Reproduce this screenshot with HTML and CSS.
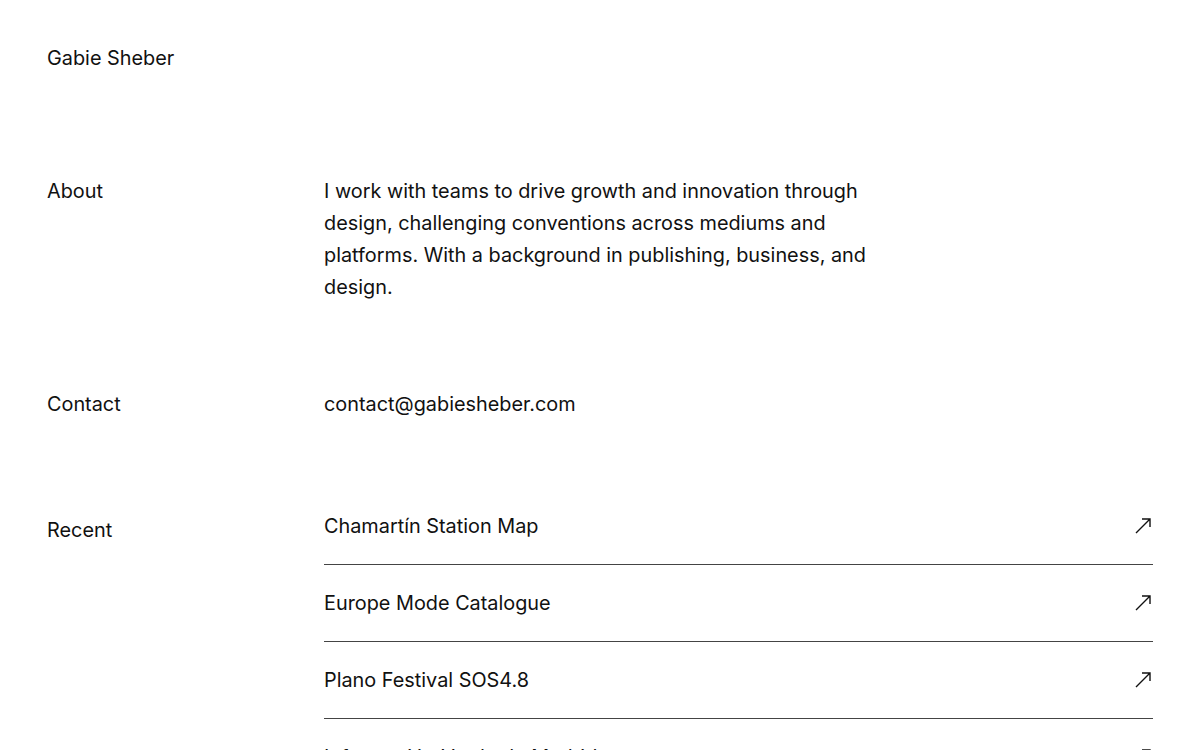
FILE: index.html
```html
<!DOCTYPE html>
<html lang="en">
<head>
<meta charset="utf-8">
<title>Gabie Sheber</title>
<link rel="stylesheet" href="styles.css">
</head>
<body>
<div class="page">
  <header class="site-header">Gabie Sheber</header>

  <section class="section section-about">
    <div class="label">About</div>
    <div class="content about-text">I work with teams to drive growth and innovation through design, challenging conventions across mediums and platforms. With a background in publishing, business, and design.</div>
  </section>

  <section class="section section-contact">
    <div class="label">Contact</div>
    <div class="content"><a class="plain-link" href="#">contact@gabiesheber.com</a></div>
  </section>

  <section class="section section-recent">
    <div class="label label-recent">Recent</div>
    <ul class="content recent-list">
      <li class="recent-item"><a href="#">Chamartín Station Map</a><svg class="arrow" viewBox="0 0 18 18" width="18" height="18"><path d="M2 16 L16 2 M8 2 H16 V10" fill="none" stroke="#111" stroke-width="1.4"/></svg></li>
      <li class="recent-item"><a href="#">Europe Mode Catalogue</a><svg class="arrow" viewBox="0 0 18 18" width="18" height="18"><path d="M2 16 L16 2 M8 2 H16 V10" fill="none" stroke="#111" stroke-width="1.4"/></svg></li>
      <li class="recent-item"><a href="#">Plano Festival SOS4.8</a><svg class="arrow" viewBox="0 0 18 18" width="18" height="18"><path d="M2 16 L16 2 M8 2 H16 V10" fill="none" stroke="#111" stroke-width="1.4"/></svg></li>
      <li class="recent-item"><a href="#">Información Verde de Madrid</a><svg class="arrow" viewBox="0 0 18 18" width="18" height="18"><path d="M2 16 L16 2 M8 2 H16 V10" fill="none" stroke="#111" stroke-width="1.4"/></svg></li>
    </ul>
  </section>
</div>
</body>
</html>
```

FILE: styles.css
```css
html, body {
  margin: 0;
  padding: 0;
  background: #ffffff;
}

body {
  font-family: Inter, "Noto Sans", "Liberation Sans", sans-serif;
  font-size: 19.85px;
  line-height: 32px;
  color: #111111;
}

.page {
  padding: 42px 47px 0 47px;
}

.site-header {
  height: 32px;
}

.section {
  display: grid;
  grid-template-columns: 277px 1fr;
}

.section-about {
  margin-top: 101px;
}

.section-contact {
  margin-top: 85px;
}

.section-recent {
  margin-top: 68px;
}

.label-recent {
  padding-top: 26px;
}

.about-text {
  max-width: 570px;
}

.plain-link,
.recent-item a {
  color: inherit;
  text-decoration: none;
}

.recent-list {
  list-style: none;
  margin: 0;
  padding: 0;
}

.recent-item {
  display: flex;
  justify-content: space-between;
  align-items: center;
  padding: 22px 0;
  border-bottom: 1px solid #444444;
}

.arrow {
  display: block;
  margin-right: 1px;
}
```
